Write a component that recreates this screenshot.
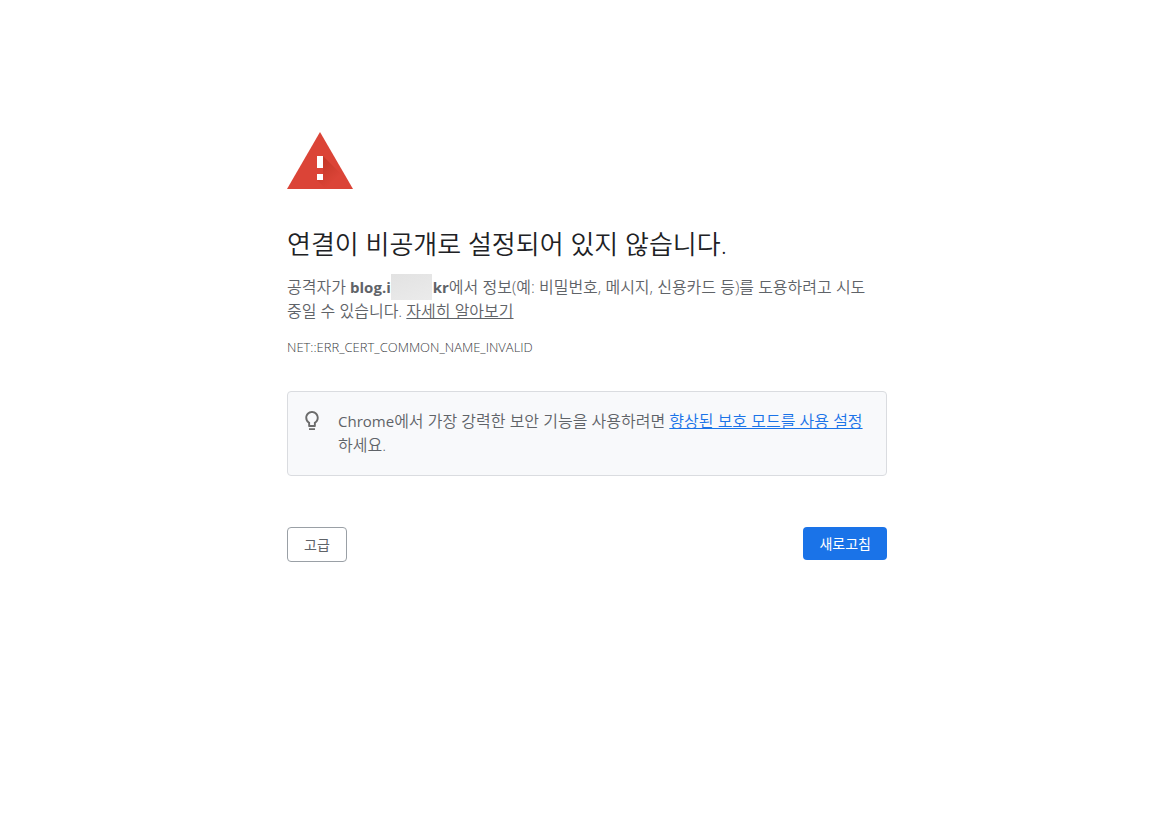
<svelte:head>
  <title>개인 정보 보호 오류</title>
</svelte:head>

<main>
  <svg class="warning" viewBox="0 0 66 57" aria-hidden="true">
    <defs>
      <linearGradient id="shade" x1="32" y1="26" x2="50" y2="46" gradientUnits="userSpaceOnUse">
        <stop offset="0" stop-color="#a52714" stop-opacity=".5" />
        <stop offset="1" stop-color="#a52714" stop-opacity="0" />
      </linearGradient>
    </defs>
    <path d="M33 0 66 57H0Z" fill="#db4437" />
    <path d="M36 24 53 41 62 57H39L30 48 36 42Z" fill="url(#shade)" />
    <path d="M30 24h6v12h-6zM30 42h6v6h-6z" fill="#fff" />
  </svg>
  <h1>연결이 비공개로 설정되어 있지 않습니다.</h1>
  <p class="message">
    공격자가 <strong>blog.i<span class="masked"></span>kr</strong>에서 정보(예: 비밀번호, 메시지, 신용카드 등)를 도용하려고 시도 중일 수 있습니다. <a href="#learn">자세히 알아보기</a>
  </p>
  <p class="code">NET::ERR_CERT_COMMON_NAME_INVALID</p>
  <section class="tip">
    <svg viewBox="0 0 24 24" aria-hidden="true">
      <path fill="#6b6b6b" d="M9 19.3h6v1.2q0 .6-.6.6H9.600q-.6 0-.6-.6zM12 2C8.140 2 5.300 5.140 5.300 8.700c0 2.300 1.100 4.200 2.900 5.500V17c0 .55.45 1 1 1h5.600c.55 0 1-.45 1-1v-2.800c1.800-1.300 2.900-3.200 2.900-5.500C18.700 5.140 15.860 2 12 2zm2.700 10.700-.8.6V16h-3.800v-2.700l-.8-.6A4.900 4.900 0 0 1 7.200 8.700C7.200 6.100 9.300 3.900 12 3.900s4.800 2.200 4.800 4.800c0 1.600-.8 3.100-2.100 4z" />
    </svg>
    <p><span class="brand">Chrome</span>에서 가장 강력한 보안 기능을 사용하려면 <a href="#enhanced">향상된 보호 모드를 사용 설정</a>하세요.</p>
  </section>
  <nav>
    <button type="button" class="secondary">고급</button>
    <button type="button" class="primary">새로고침</button>
  </nav>
</main>

<style>
  :global(body) {
    background: #fff;
    color: #5f6368;
    font: 350 16px/24px "Open Sans", "Noto Sans CJK KR", sans-serif;
  }
  main {
    box-sizing: border-box;
    max-width: 600px;
    margin: 0 auto;
    padding-top: 132px;
  }
  .warning {
    display: block;
    width: 66px;
    height: 57px;
  }
  h1 {
    margin: 37px 0 13px;
    color: #202124;
    font-size: 26px;
    font-weight: 350;
    line-height: 36px;
  }
  p { margin: 0; }
  strong, .brand {
    font-size: 15px;
    line-height: 1;
  }
  .brand { font-weight: 400; }
  .masked {
    display: inline-block;
    width: 41px;
    height: 26px;
    margin: -6px 1px -2px 0;
    vertical-align: middle;
    background: linear-gradient(160deg, #e2e2e2, #ebebeb);
  }
  .message { word-break: keep-all; }
  .message a { color: inherit; }
  .code {
    margin-top: 12px;
    color: #3c4043;
    font-size: 13px;
    font-weight: 300;
  }
  .tip {
    display: flex;
    gap: 14px;
    margin-top: 32px;
    padding: 17px 12px 18px;
    border: 1px solid #dadce0;
    border-radius: 4px;
    background: #f8f9fb;
  }
  .tip svg {
    flex: none;
    width: 24px;
    height: 24px;
  }
  .tip a { color: #1a73e8; }
  nav {
    display: flex;
    align-items: flex-start;
    justify-content: space-between;
    margin-top: 51px;
  }
  button {
    padding: 0 16px 2px;
    border-radius: 4px;
    font-family: inherit;
    font-size: 14px;
    cursor: pointer;
  }
  .secondary {
    height: 35px;
    border: 1px solid #9aa0a6;
    background: #fff;
    color: #5f6368;
  }
  .primary {
    height: 33px;
    border: 0;
    background: #1a73e8;
    color: #fff;
  }
</style>
